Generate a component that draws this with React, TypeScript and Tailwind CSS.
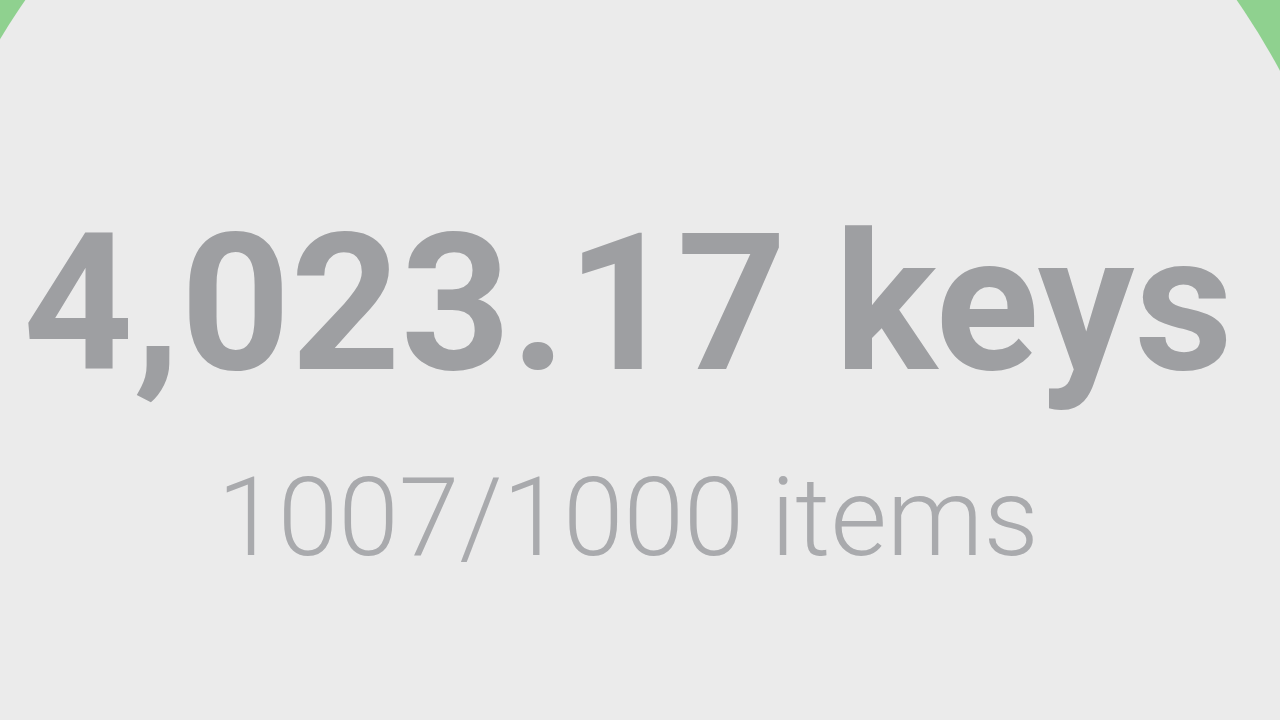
export default function App() {
  return (
    <div className="w-[1280px] h-[720px] overflow-hidden bg-[#8fd18f] flex flex-col font-['Roboto',sans-serif]">
      {/* big gauge disc, only its middle shows */}
      <div className="w-[1474px] h-[1474px] shrink-0 -ml-[106px] -mt-[317px] rounded-full bg-[#ebebeb] flex flex-col items-center pt-[525px] pr-[6px]">
        <div className="text-[192px] leading-none font-bold text-[#9e9fa2] whitespace-nowrap">
          4,023.17 keys
        </div>
        <div className="mt-[64px] text-[109px] leading-none font-light text-[#a9aaad] whitespace-nowrap">
          1007/1000 items
        </div>
      </div>
    </div>
  );
}
